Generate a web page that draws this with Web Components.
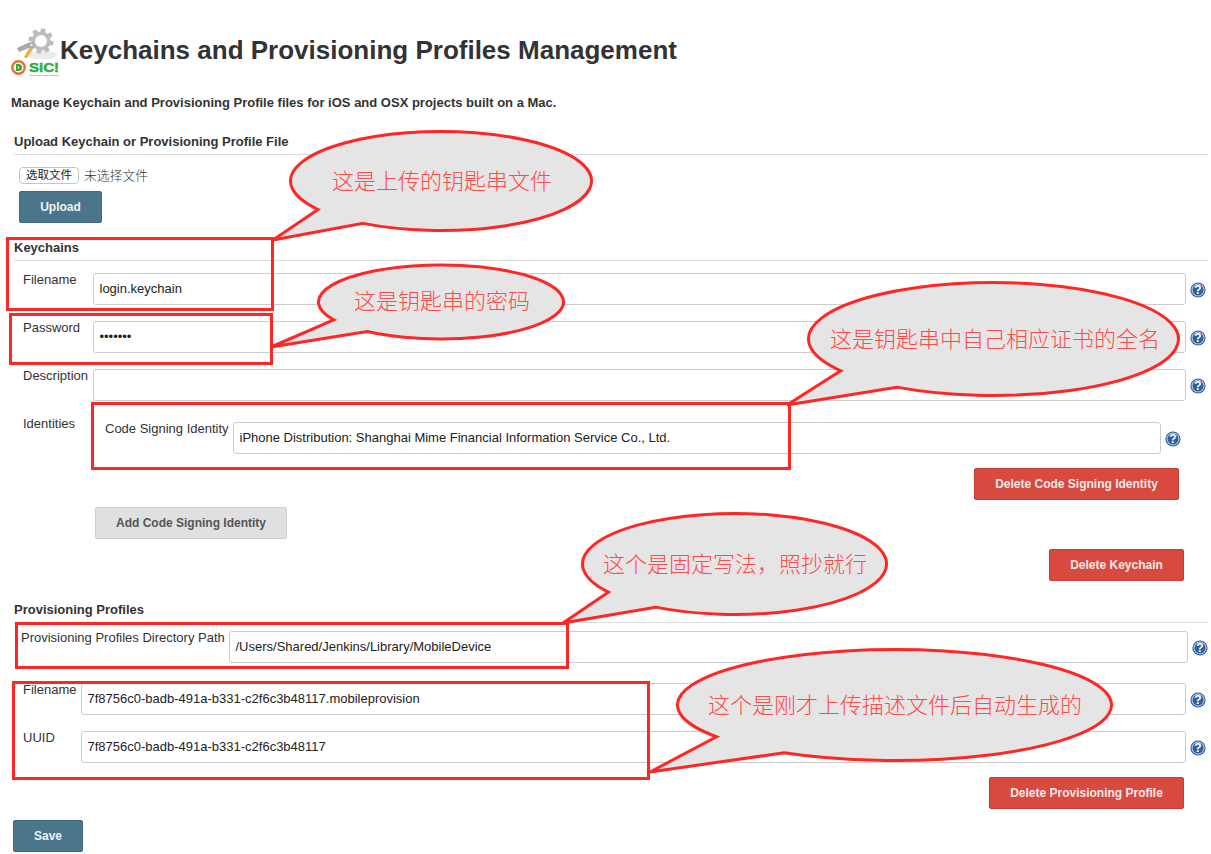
<!DOCTYPE html>
<html lang="zh-CN">
<head>
<meta charset="utf-8">
<title>Keychains and Provisioning Profiles Management</title>
<style>
  html, body {
    margin: 0;
    padding: 0;
    background: #fff;
    color: #333;
    font-family: "Liberation Sans", Arial, sans-serif;
  }
  body {
    position: relative;
    height: 854px;
    overflow: hidden;
  }
  .file-row {
    display: flex;
    align-items: center;
    gap: 5px;
    margin: 12px 0 0 5px;
    height: 17px;
  }
  .upload { margin: 7px 0 0 5px; }
  .save { margin: 11px 0 0 13px; }
  .end { display: flex; justify-content: flex-end; }
</style>
</head>
<body>

<template id="field-tpl">
  <style>
    :host {
      display: flex;
      align-items: flex-start;
      margin-top: var(--top, 16px);
      padding-left: var(--pad, 9px);
      padding-right: var(--right, 2px);
      font-size: 13px;
      color: #333;
    }
    .label {
      flex: none;
      box-sizing: border-box;
      width: var(--label, 70px);
      margin-top: -1px;
      line-height: 16px;
      white-space: nowrap;
    }
    .control { flex: 1; min-width: 0; }
  </style>
  <div class="label"></div>
  <div class="control"><slot></slot></div>
</template>

<script>
  class KHeader extends HTMLElement {
    constructor() {
      super();
      this.attachShadow({ mode: "open" });
    }

    gear() {
      // eight toothed wheel round 41,41
      const pts = [];
      for (let i = 0; i < 8; i++) {
        const a = (i * Math.PI) / 4 + 0.2;
        [[-0.26, 9.5], [-0.17, 12.8], [0.17, 12.8], [0.26, 9.5]].forEach(([d, r]) => {
          pts.push((41 + r * Math.cos(a + d)).toFixed(1) + " " + (41 + r * Math.sin(a + d)).toFixed(1));
        });
      }
      return "M" + pts.join("L") + "Z";
    }

    connectedCallback() {
      this.shadowRoot.innerHTML = `
        <style>
          :host {
            display: flex;
            align-items: center;
            height: 48px;
            margin-top: 28px;
            padding-left: 11px;
          }
          svg { flex: none; display: block; overflow: visible; }
          h1 {
            margin: 0 0 4px 0;
            font-size: 26px;
            line-height: 44px;
            font-weight: bold;
            color: #333;
            white-space: nowrap;
          }
        </style>
        <svg width="49" height="48" viewBox="11 28 49 48">
          <ellipse cx="42" cy="55" rx="15" ry="4.5" fill="#ececec"/>
          <path d="${this.gear()}" fill="#bdbdbd"/>
          <circle cx="41" cy="41" r="6" fill="#fff"/>
          <path d="M30 47 L24 57 L26.5 58.5 L33 49Z" fill="#e8b13c"/>
          <path d="M17 48 L29 42.5 L33 42 L35 45 L33 48 L29 48 L19 52Z" fill="#a8a8a8"/>
          <circle cx="31.5" cy="45" r="1.3" fill="#eee"/>
          <circle cx="18.5" cy="67.5" r="6.2" fill="#fff" stroke="#ef6a2b" stroke-width="2.4"/>
          <path d="M16 64 h2.6 a3.5 3.5 0 0 1 0 7 H16Z M17.8 66 v3 a1.5 1.5 0 0 0 0 -3Z" fill="#2fa83a" fill-rule="evenodd"/>
          <text x="29" y="71.6" font-family="Liberation Sans, sans-serif" font-size="13" font-weight="bold" fill="#2fae3c" stroke="#2fae3c" stroke-width="0.5" textLength="30" lengthAdjust="spacingAndGlyphs">SiC!</text>
          <text x="29" y="76.2" font-family="Liberation Sans, sans-serif" font-size="2.4" font-weight="bold" fill="#3aa845" textLength="30" lengthAdjust="spacingAndGlyphs">SOFTWARE GEEK</text>
        </svg>
        <h1><slot></slot></h1>
      `;
    }
  }

  class KLead extends HTMLElement {
    constructor() {
      super();
      this.attachShadow({ mode: "open" }).innerHTML = `
        <style>
          :host {
            display: block;
            margin: 18px 0 0 11px;
            padding-top: 1px;
            font-size: 13px;
            line-height: 15px;
            font-weight: bold;
            color: #333;
          }
        </style>
        <slot></slot>
      `;
    }
  }

  class KSection extends HTMLElement {
    constructor() {
      super();
      this.attachShadow({ mode: "open" }).innerHTML = `
        <style>
          :host {
            display: block;
            margin: var(--top, 16px) 3px 0 14px;
          }
          .head {
            font-size: 13px;
            line-height: 16px;
            font-weight: bold;
            color: #333;
            padding: 1px 0 4px;
            border-bottom: 1px solid #dcdcdc;
          }
        </style>
        <div class="head"></div>
        <slot></slot>
      `;
    }

    connectedCallback() {
      this.shadowRoot.querySelector(".head").textContent = this.getAttribute("title");
    }
  }

  class KField extends HTMLElement {
    constructor() {
      super();
      const tpl = document.getElementById("field-tpl");
      this.attachShadow({ mode: "open" }).appendChild(tpl.content.cloneNode(true));
    }

    connectedCallback() {
      this.shadowRoot.querySelector(".label").textContent = this.getAttribute("label");
    }
  }

  class KInput extends HTMLElement {
    constructor() {
      super();
      this.attachShadow({ mode: "open" }).innerHTML = `
        <style>
          :host {
            display: flex;
            align-items: flex-start;
            gap: 4px;
          }
          .box {
            flex: 1;
            min-width: 0;
            box-sizing: border-box;
            height: 32px;
            padding: 0 6px 0 5.5px;
            border: 1px solid #ccc;
            border-radius: 3px;
            background: #fff;
            font-size: 13px;
            line-height: 30px;
            color: #222;
            white-space: nowrap;
          }
          k-help { margin-top: 9px; }
        </style>
        <div class="box"><slot></slot></div>
        <k-help></k-help>
      `;
    }
  }

  class KHelp extends HTMLElement {
    constructor() {
      super();
      this.attachShadow({ mode: "open" }).innerHTML = `
        <style>
          :host { display: block; flex: none; width: 16px; height: 16px; }
          svg { display: block; }
        </style>
        <svg width="16" height="16" viewBox="0 0 16 16">
          <circle cx="8" cy="8" r="7.6" fill="#2b5b97"/>
          <circle cx="8" cy="8" r="6.5" fill="#c9d8ea"/>
          <circle cx="8" cy="8" r="5.5" fill="#2f5f9c"/>
          <text x="8" y="12.2" text-anchor="middle" font-family="Liberation Sans, sans-serif" font-size="12" font-weight="bold" fill="#fff">?</text>
        </svg>
      `;
    }
  }

  class KButton extends HTMLElement {
    constructor() {
      super();
      this.attachShadow({ mode: "open" }).innerHTML = `
        <style>
          :host {
            display: block;
            width: fit-content;
          }
          button {
            display: block;
            box-sizing: border-box;
            height: 32px;
            width: var(--w, auto);
            padding: 0;
            border: 1px solid #3f6a80;
            border-radius: 2px;
            background: #4b758b;
            color: #eef2f4;
            font: bold 12px "Liberation Sans", Arial, sans-serif;
          }
          :host([kind="danger"]) button {
            border-color: #c53d33;
            background: #d84a40;
            color: #f5e9e8;
          }
          :host([kind="plain"]) button {
            border-color: #cfcfcf;
            background: #e0e0e0;
            color: #555;
          }
        </style>
        <button type="button"><slot></slot></button>
      `;
    }
  }

  class KFilePick extends HTMLElement {
    constructor() {
      super();
      this.attachShadow({ mode: "open" }).innerHTML = `
        <style>
          :host {
            display: block;
            box-sizing: border-box;
            width: 60px;
            height: 17px;
            border: 1px solid #c4c4c4;
            border-radius: 4px;
            background: #fff;
            text-align: center;
            font: 11.5px/15px "Liberation Sans", "Noto Sans CJK SC", sans-serif;
            color: #222;
          }
        </style>
        <slot></slot>
      `;
    }
  }

  // red frames drawn over the form
  class KMark extends HTMLElement {
    constructor() {
      super();
      this.attachShadow({ mode: "open" }).innerHTML = `
        <style>
          :host {
            position: absolute;
            box-sizing: border-box;
            border: 3px solid #ff2626;
            pointer-events: none;
          }
        </style>
      `;
    }

    connectedCallback() {
      const [x, y, r, b] = this.getAttribute("box").split(",").map(Number);
      this.style.left = x + "px";
      this.style.top = y + "px";
      this.style.width = r - x + "px";
      this.style.height = b - y + "px";
    }
  }

  // speech bubble: ellipse cx,cy,rx,ry and a tail from p1 to tip to p2
  class KCallout extends HTMLElement {
    constructor() {
      super();
      this.attachShadow({ mode: "open" }).innerHTML = `
        <style>
          :host {
            position: absolute;
            left: 0;
            top: 0;
            width: 1211px;
            height: 854px;
            pointer-events: none;
          }
          svg { position: absolute; left: 0; top: 0; }
          .text {
            position: absolute;
            transform: translate(-50%, -50%);
            font: 300 22px/30px "Noto Sans CJK SC", "Liberation Sans", sans-serif;
            color: #ff4a4a;
            white-space: nowrap;
          }
        </style>
        <svg width="1211" height="854" viewBox="0 0 1211 854">
          <path fill="#e5e5e5" stroke="#ff2626" stroke-width="3" stroke-linejoin="miter"/>
        </svg>
        <div class="text"><slot></slot></div>
      `;
    }

    connectedCallback() {
      const [cx, cy, rx, ry] = this.getAttribute("oval").split(",").map(Number);
      const [x1, y1, tx, ty, x2, y2] = this.getAttribute("tail").split(",").map(Number);
      const snap = (x, y) => {
        const a = Math.atan2((y - cy) / ry, (x - cx) / rx);
        return [cx + rx * Math.cos(a), cy + ry * Math.sin(a)];
      };
      const p1 = snap(x1, y1);
      const p2 = snap(x2, y2);
      this.shadowRoot.querySelector("path").setAttribute("d",
        `M${p1[0]} ${p1[1]} A${rx} ${ry} 0 1 1 ${p2[0]} ${p2[1]} L${tx} ${ty} Z`);
      const text = this.shadowRoot.querySelector(".text");
      text.style.left = this.getAttribute("tx") + "px";
      text.style.top = this.getAttribute("ty") + "px";
    }
  }

  customElements.define("k-header", KHeader);
  customElements.define("k-lead", KLead);
  customElements.define("k-section", KSection);
  customElements.define("k-field", KField);
  customElements.define("k-help", KHelp);
  customElements.define("k-input", KInput);
  customElements.define("k-button", KButton);
  customElements.define("k-file-pick", KFilePick);
  customElements.define("k-mark", KMark);
  customElements.define("k-callout", KCallout);
</script>

<k-header>Keychains and Provisioning Profiles Management</k-header>
<k-lead>Manage Keychain and Provisioning Profile files for iOS and OSX projects built on a Mac.</k-lead>

<k-section title="Upload Keychain or Provisioning Profile File" style="--top:23px">
  <div class="file-row">
    <k-file-pick>选取文件</k-file-pick>
    <span style="font:300 12.8px/15px 'Noto Sans CJK SC',sans-serif;color:#333;margin-top:-2px">未选择文件</span>
  </div>
  <div class="upload"><k-button style="--w:83px">Upload</k-button></div>
</k-section>

<k-section title="Keychains">
  <k-field label="Filename" style="--top:12px"><k-input>login.keychain</k-input></k-field>
  <k-field label="Password" style="--top:16px"><k-input>•••••••</k-input></k-field>
  <k-field label="Description" style="--top:16px"><k-input></k-input></k-field>
  <k-field label="Identities" style="--top:16px">
    <k-field label="Code Signing Identity" style="--top:5px;--pad:12px;--right:25px;--label:128px">
      <k-input>iPhone Distribution: Shanghai Mime Financial Information Service Co., Ltd.</k-input>
    </k-field>
    <div class="end" style="margin:14px 27px 0 0"><k-button kind="danger" style="--w:205px">Delete Code Signing Identity</k-button></div>
    <div style="margin:7px 0 0 2px"><k-button kind="plain" style="--w:192px">Add Code Signing Identity</k-button></div>
    <div class="end" style="margin:10px 22px 0 0"><k-button kind="danger" style="--w:135px">Delete Keychain</k-button></div>
  </k-field>
</k-section>

<k-section title="Provisioning Profiles" style="--top:20px">
  <k-field label="Provisioning Profiles Directory Path" style="--top:8px;--pad:7px;--label:208px;--right:0px">
    <k-input>/Users/Shared/Jenkins/Library/MobileDevice</k-input>
  </k-field>
  <k-field label="Filename" style="--top:20px;--label:58px"><k-input>7f8756c0-badb-491a-b331-c2f6c3b48117.mobileprovision</k-input></k-field>
  <k-field label="UUID" style="--top:16px;--label:58px"><k-input>7f8756c0-badb-491a-b331-c2f6c3b48117</k-input></k-field>
  <div class="end" style="margin:14px 24px 0 0"><k-button kind="danger" style="--w:195px">Delete Provisioning Profile</k-button></div>
</k-section>

<div class="save"><k-button style="--w:70px">Save</k-button></div>

<k-mark box="6,237,274,311"></k-mark>
<k-mark box="9,313,273,365"></k-mark>
<k-mark box="91,402,791,470"></k-mark>
<k-mark box="15,622,569,669"></k-mark>
<k-mark box="12,681,650,780"></k-mark>

<k-callout oval="441,181,150.5,49.5" tail="316,210,273,240,362,224" tx="442" ty="179">这是上传的钥匙串文件</k-callout>
<k-callout oval="441,302,122.5,37" tail="333,320,271,347,366,332" tx="442" ty="299">这是钥匙串的密码</k-callout>
<k-callout oval="993.5,339,185,56.5" tail="840,371,787,405,897,387" tx="995" ty="337">这是钥匙串中自己相应证书的全名</k-callout>
<k-callout oval="734.5,564,152,50.5" tail="609,592,563,623,654,608" tx="735" ty="562">这个是固定写法，照抄就行</k-callout>
<k-callout oval="894.5,705,217,55.5" tail="715,737,650,772,781,754" tx="895" ty="703">这个是刚才上传描述文件后自动生成的</k-callout>

</body>
</html>
